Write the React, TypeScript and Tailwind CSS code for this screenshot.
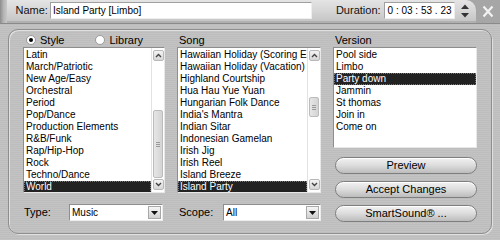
import React from 'react';

const styles = [
  'Latin',
  'March/Patriotic',
  'New Age/Easy',
  'Orchestral',
  'Period',
  'Pop/Dance',
  'Production Elements',
  'R&B/Funk',
  'Rap/Hip-Hop',
  'Rock',
  'Techno/Dance',
  'World',
];

const songs = [
  'Hawaiian Holiday (Scoring Essentials)',
  'Hawaiian Holiday (Vacation)',
  'Highland Courtship',
  'Hua Hau Yue Yuan',
  'Hungarian Folk Dance',
  "India's Mantra",
  'Indian Sitar',
  'Indonesian Gamelan',
  'Irish Jig',
  'Irish Reel',
  'Island Breeze',
  'Island Party',
  'Island Party Sunset',
];

const versions = ['Pool side', 'Limbo', 'Party down', 'Jammin', 'St thomas', 'Join in', 'Come on'];

function ArrowBtn({ dir }: { dir: 'up' | 'down' }) {
  return (
    <div className="w-[11px] h-[11px] mx-auto rounded-[2px] border border-[#b8b8b8] bg-gradient-to-b from-[#f4f4f4] to-[#d6d6d6] flex items-center justify-center">
      <svg width="7" height="5" viewBox="0 0 7 5">
        <path
          d={dir === 'up' ? 'M1 4 L3.5 1.5 L6 4' : 'M1 1 L3.5 3.5 L6 1'}
          stroke="#444"
          strokeWidth="1.4"
          fill="none"
        />
      </svg>
    </div>
  );
}

// scrollbar with a thumb placed at a fixed offset
function ScrollBar({ top, height }: { top: string; height: string }) {
  return (
    <div className="w-[13px] shrink-0 border-l border-[#e2e2e2] bg-white flex flex-col py-[2px]">
      <ArrowBtn dir="up" />
      <div className="flex-1 relative">
        <div
          className={`absolute left-[1px] w-[10px] rounded-[2px] border border-[#bcbcbc] bg-gradient-to-r from-[#e6e6e6] to-[#d4d4d4] flex items-center justify-center ${top} ${height}`}
        >
          <div className="flex flex-col gap-[1px]">
            <div className="w-[4px] h-px bg-[#9a9a9a]" />
            <div className="w-[4px] h-px bg-[#9a9a9a]" />
            <div className="w-[4px] h-px bg-[#9a9a9a]" />
          </div>
        </div>
      </div>
      <ArrowBtn dir="down" />
    </div>
  );
}

function ListBox({
  items,
  selected,
  scroll,
  className,
}: {
  items: string[];
  selected: string;
  scroll?: { top: string; height: string };
  className: string;
}) {
  return (
    <div className={`bg-white border border-[#8e8e8e] border-r-[#e8e8e8] border-b-[#e8e8e8] flex overflow-hidden ${className}`}>
      <div className="flex-1 min-w-0 pt-[1px] overflow-hidden">
        {items.map((item) => (
          <div
            key={item}
            className={`h-[12px] leading-[12px] px-[2px] whitespace-nowrap overflow-hidden ${
              item === selected ? 'bg-[#222222] text-white outline-1 outline-dotted outline-[#777] -outline-offset-1' : 'text-black'
            }`}
          >
            {item}
          </div>
        ))}
      </div>
      {scroll && <ScrollBar top={scroll.top} height={scroll.height} />}
    </div>
  );
}

function Select({ value, className }: { value: string; className: string }) {
  return (
    <div className={`h-[17px] bg-white border border-[#8e8e8e] border-r-[#ececec] border-b-[#ececec] flex items-center ${className}`}>
      <span className="flex-1 pl-[2px] text-[10px] leading-[12px] text-black">{value}</span>
      <div className="w-[13px] h-[13px] mr-[1px] border border-[#a8a8a8] bg-gradient-to-b from-[#f6f6f6] to-[#cfcfcf] flex items-center justify-center">
        <svg width="7" height="4" viewBox="0 0 7 4">
          <path d="M0 0 H7 L3.5 4 Z" fill="#111" />
        </svg>
      </div>
    </div>
  );
}

function Radio({ checked, label }: { checked: boolean; label: string }) {
  return (
    <div className="flex items-center gap-[4px]">
      <div className="w-[10px] h-[10px] rounded-full bg-white border border-[#9a9a9a] flex items-center justify-center">
        {checked && <div className="w-[4px] h-[4px] rounded-full bg-black" />}
      </div>
      <span className="text-[11px] leading-[13px] text-black">{label}</span>
    </div>
  );
}

function PillButton({ label }: { label: string }) {
  return (
    <div className="h-[17px] rounded-full border border-[#7e7e7e] bg-gradient-to-b from-[#f2f2f2] via-[#dcdcdc] to-[#bcbcbc] shadow-[inset_0_1px_0_#ffffff] flex items-center justify-center text-[11px] leading-[13px] text-black">
      {label}
    </div>
  );
}

export default function App() {
  return (
    <div
      className="w-[500px] h-[240px] overflow-hidden flex flex-col text-[10px] text-black bg-[repeating-linear-gradient(0deg,#c3c3c3_0px,#c3c3c3_1px,#bdbdbd_1px,#bdbdbd_2px)]"
      style={{ fontFamily: '"Liberation Sans", Arial, sans-serif' }}
    >
      {/* Title / name bar */}
      <div className="h-[24px] flex shrink-0 bg-[#a6a6a6] border-b border-[#8a8a8a]">
        <div className="w-[8px] bg-gradient-to-r from-[#8c8c8c] via-[#b4b4b4] to-[#c8c8c8]" />
        <div className="flex-1 flex items-center rounded-tr-[10px] bg-gradient-to-b from-[#e4e4e4] via-[#d6d6d6] to-[#c6c6c6] border-b-2 border-[#b0b0b0] pl-[9px] pr-[6px]">
          <span className="text-[11px] text-[#111] mr-[2px]">Name:</span>
          <div className="w-[262px] h-[17px] bg-white border border-[#a0a0a0] border-r-[#eeeeee] border-b-[#eeeeee] flex items-center pl-[2px] text-[10px]">
            Island Party [Limbo]
          </div>
          <span className="ml-[24px] text-[11px] text-[#111]">Duration:</span>
          <div className="ml-[3px] w-[71px] h-[17px] bg-white border border-[#a0a0a0] border-r-[#eeeeee] border-b-[#eeeeee] flex items-center pl-[3px] text-[10px] whitespace-nowrap">
            0 : 03 : 53 . 23
          </div>
          <svg className="ml-[5px]" width="10" height="16" viewBox="0 0 10 16">
            <path d="M1 6 L5 1.5 L9 6 Z" fill="#333" />
            <path d="M1 10 L5 14.5 L9 10 Z" fill="#333" />
          </svg>
        </div>
        <div className="w-[30px] flex items-center justify-center">
          <svg width="12" height="13" viewBox="0 0 12 13">
            <path d="M1.5 1.5 L10.5 11.5 M10.5 1.5 L1.5 11.5" stroke="#f2f2f2" strokeWidth="2.2" />
          </svg>
        </div>
      </div>

      {/* Body */}
      <div className="flex-1 pl-[8px] pr-[8px] pt-[5px] pb-[6px]">
        <div className="h-full rounded-[10px] border border-[#8e8e8e] shadow-[inset_1px_1px_0_#e0e0e0,1px_1px_0_#e0e0e0] flex gap-[12px] pl-[14px] pr-[14px] pt-[3px]">
          {/* Left column */}
          <div className="w-[143px] flex flex-col">
            <div className="h-[14px] flex items-center gap-[31px] pl-[3px]">
              <Radio checked label="Style" />
              <Radio checked={false} label="Library" />
            </div>
            <ListBox
              items={styles}
              selected="World"
              scroll={{ top: 'top-[49px]', height: 'h-[68px]' }}
              className="h-[146px]"
            />
            <div className="mt-[11px] flex items-center">
              <span className="w-[46px] pl-[1px] text-[11px]">Type:</span>
              <Select value="Music" className="w-[94px]" />
            </div>
          </div>

          {/* Middle column */}
          <div className="w-[144px] flex flex-col">
            <div className="h-[14px] flex items-center pl-[2px] text-[11px] leading-[13px]">Song</div>
            <ListBox
              items={songs}
              selected="Island Party"
              scroll={{ top: 'top-[36px]', height: 'h-[20px]' }}
              className="h-[146px]"
            />
            <div className="mt-[11px] flex items-center">
              <span className="w-[46px] pl-[2px] text-[11px]">Scope:</span>
              <Select value="All" className="w-[98px]" />
            </div>
          </div>

          {/* Right column */}
          <div className="w-[145px] flex flex-col">
            <div className="h-[14px] flex items-center pl-[2px] text-[11px] leading-[13px]">Version</div>
            <ListBox items={versions} selected="Party down" className="h-[101px]" />
            <div className="mt-[9px] pl-[2px] flex flex-col gap-[7px]">
              <PillButton label="Preview" />
              <PillButton label="Accept Changes" />
              <PillButton label="SmartSound® ..." />
            </div>
          </div>
        </div>
      </div>
    </div>
  );
}
